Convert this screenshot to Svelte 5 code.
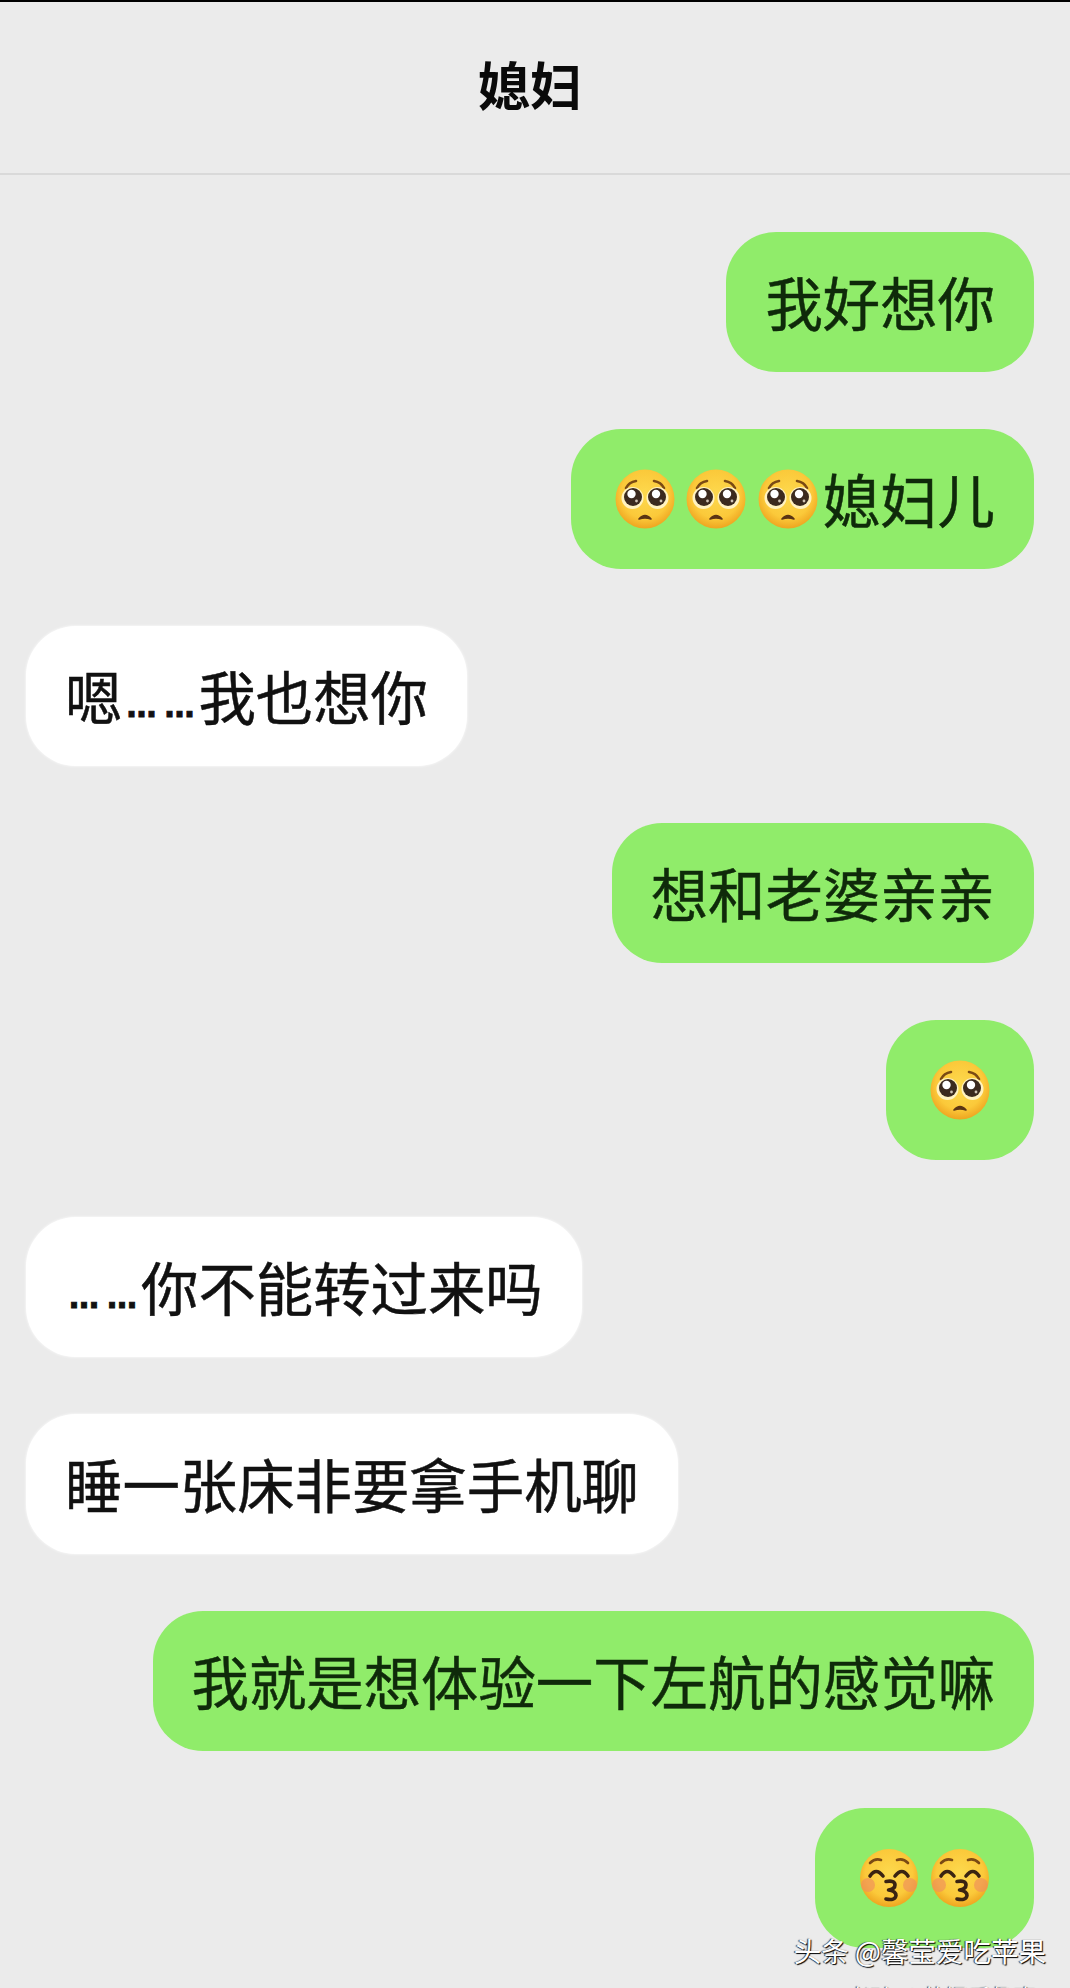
<script>
	const messages = [
		{ id: 1, mine: true, parts: [{ t: '我好想你' }] },
		{ id: 2, mine: true, parts: [{ e: 'plead' }, { e: 'plead' }, { e: 'plead' }, { t: '媳妇儿' }] },
		{ id: 3, mine: false, parts: [{ t: '嗯' }, { d: '…' }, { d: '…' }, { t: '我也想你' }] },
		{ id: 4, mine: true, parts: [{ t: '想和老婆亲亲' }] },
		{ id: 5, mine: true, parts: [{ e: 'plead' }] },
		{ id: 6, mine: false, parts: [{ d: '…' }, { d: '…' }, { t: '你不能转过来吗' }] },
		{ id: 7, mine: false, parts: [{ t: '睡一张床非要拿手机聊' }] },
		{ id: 8, mine: true, parts: [{ t: '我就是想体验一下左航的感觉嘛' }] },
		{ id: 9, mine: true, parts: [{ e: 'kiss' }, { e: 'kiss' }] }
	];
</script>

{#snippet plead()}
	<svg class="emoji" viewBox="0 0 60 60" aria-hidden="true">
		<circle cx="30" cy="30" r="29.5" fill="url(#face)" />
		<path d="M11 19 Q14 13 21 12" class="brow" />
		<path d="M49 19 Q46 13 39 12" class="brow" />
		<circle cx="17.5" cy="29" r="11" fill="#fff2c0" />
		<circle cx="42.5" cy="29" r="11" fill="#fff2c0" />
		<circle cx="18" cy="28" r="9" fill="#3b2a1e" />
		<circle cx="42" cy="28" r="9" fill="#3b2a1e" />
		<circle cx="16.5" cy="25" r="4.2" fill="#fff" />
		<circle cx="41" cy="25" r="4.2" fill="#fff" />
		<circle cx="21.5" cy="32" r="1.4" fill="#cfc4b4" />
		<circle cx="46" cy="32" r="1.4" fill="#cfc4b4" />
		<path d="M24 50 Q30 43 36 50 Q30 48 24 50Z" fill="#5a3414" stroke="#5a3414" stroke-width="1.6" stroke-linejoin="round" />
	</svg>
{/snippet}

{#snippet kiss()}
	<svg class="emoji" viewBox="0 0 60 60" aria-hidden="true">
		<circle cx="30" cy="30" r="29" fill="url(#face)" />
		<circle cx="9" cy="37" r="7" fill="#ee8f5c" opacity="0.65" />
		<circle cx="51" cy="37" r="7" fill="#ee8f5c" opacity="0.65" />
		<path d="M11 15 Q16 10 22 12" class="brow" />
		<path d="M49 15 Q44 10 38 12" class="brow" />
		<path d="M11 28 Q17 19 24 28" class="eye" />
		<path d="M36 28 Q43 19 49 28" class="eye" />
		<path d="M27 33.5 Q36 32 36 37 Q36 41 29.5 42 Q37 43 37 47.5 Q36 53 27 51" class="lips" />
	</svg>
{/snippet}

<div class="screen">
	<svg class="defs" width="0" height="0" aria-hidden="true">
		<defs>
			<radialGradient id="face" cx="50%" cy="42%" r="58%">
				<stop offset="0%" stop-color="#fdd94e" />
				<stop offset="70%" stop-color="#fbc93a" />
				<stop offset="100%" stop-color="#eea520" />
			</radialGradient>
		</defs>
	</svg>

	<header class="title">媳妇</header>

	<div class="chat">
		{#each messages as msg (msg.id)}
			<div class="row {msg.mine ? 'mine' : 'theirs'}">
				<div class="bubble">
					{#each msg.parts as part}
						{#if part.t}
							<span class="txt">{part.t}</span>
						{:else if part.d}
							<span class="dots">{part.d}</span>
						{:else if part.e === 'plead'}
							{@render plead()}
						{:else}
							{@render kiss()}
						{/if}
					{/each}
				</div>
			</div>
		{/each}
	</div>

	<div class="watermark">
		<div class="mark-main">头条 @馨莹爱吃苹果</div>
		<div class="mark-sub">老孙 八卦娱乐趣事</div>
	</div>
</div>

<style>
	:global(body) {
		margin: 0;
		background: #ebebeb;
	}

	.screen {
		position: relative;
		height: 1988px;
		overflow: hidden;
		background: #ebebeb;
		border-top: 2px solid #000;
		box-sizing: border-box;
		font-family: "Noto Sans CJK SC", "Noto Sans", sans-serif;
		color: #111;
	}

	.defs {
		position: absolute;
	}

	.title {
		height: 173px;
		box-sizing: border-box;
		padding: 0 10px 8px 0;
		display: flex;
		align-items: center;
		justify-content: center;
		font-size: 52px;
		font-weight: 700;
		color: #0a0a0a;
		border-bottom: 2px solid #d9d9d9;
	}

	.chat {
		display: flex;
		flex-direction: column;
		gap: 57px;
		padding: 57px 36px 0 26px;
	}

	.row {
		display: flex;
	}

	.row.mine {
		justify-content: flex-end;
	}

	.bubble {
		height: 140px;
		box-sizing: border-box;
		padding: 0 39px;
		display: flex;
		align-items: center;
		border-radius: 50px;
		font-size: 57.4px;
		white-space: nowrap;
	}

	.mine .bubble {
		background: #90ec6a;
		color: #0f2a0a;
	}

	.theirs .bubble {
		background: #fff;
		box-shadow: 0 0 3px #fff;
	}

	.txt {
		margin-bottom: 3px;
		-webkit-text-stroke: 0.5px currentColor;
	}

	.dots {
		width: 38px;
		box-sizing: border-box;
		padding-left: 4px;
		font-family: "DejaVu Sans", sans-serif;
		font-weight: 700;
		font-size: 30px;
		line-height: 1;
		align-self: flex-end;
		margin-bottom: 44px;
		-webkit-text-stroke: 0.8px currentColor;
	}

	.emoji {
		width: 60px;
		height: 60px;
		flex: none;
	}

	.emoji:first-child {
		margin-left: 5px;
	}

	.emoji:last-child {
		margin-right: 5px;
	}

	.emoji + .emoji {
		margin-left: 11.5px;
	}

	.emoji + .txt {
		margin-left: 5px;
	}

	.brow {
		fill: none;
		stroke: #7a4a14;
		stroke-width: 2.6;
		stroke-linecap: round;
	}

	.eye, .lips {
		fill: none;
		stroke: #3a2412;
		stroke-width: 3.6;
		stroke-linecap: round;
		stroke-linejoin: round;
	}

	.watermark {
		position: absolute;
		right: 24px;
		top: 1930px;
		text-align: right;
		color: #fff;
		text-shadow: 1px 1px 1px #000, -1px 0 1px #333;
	}

	.mark-main {
		font-size: 27.5px;
		line-height: 36px;
	}

	.mark-sub {
		margin-top: 11px;
		padding-right: 9px;
		font-size: 23px;
		line-height: 34px;
	}
</style>
